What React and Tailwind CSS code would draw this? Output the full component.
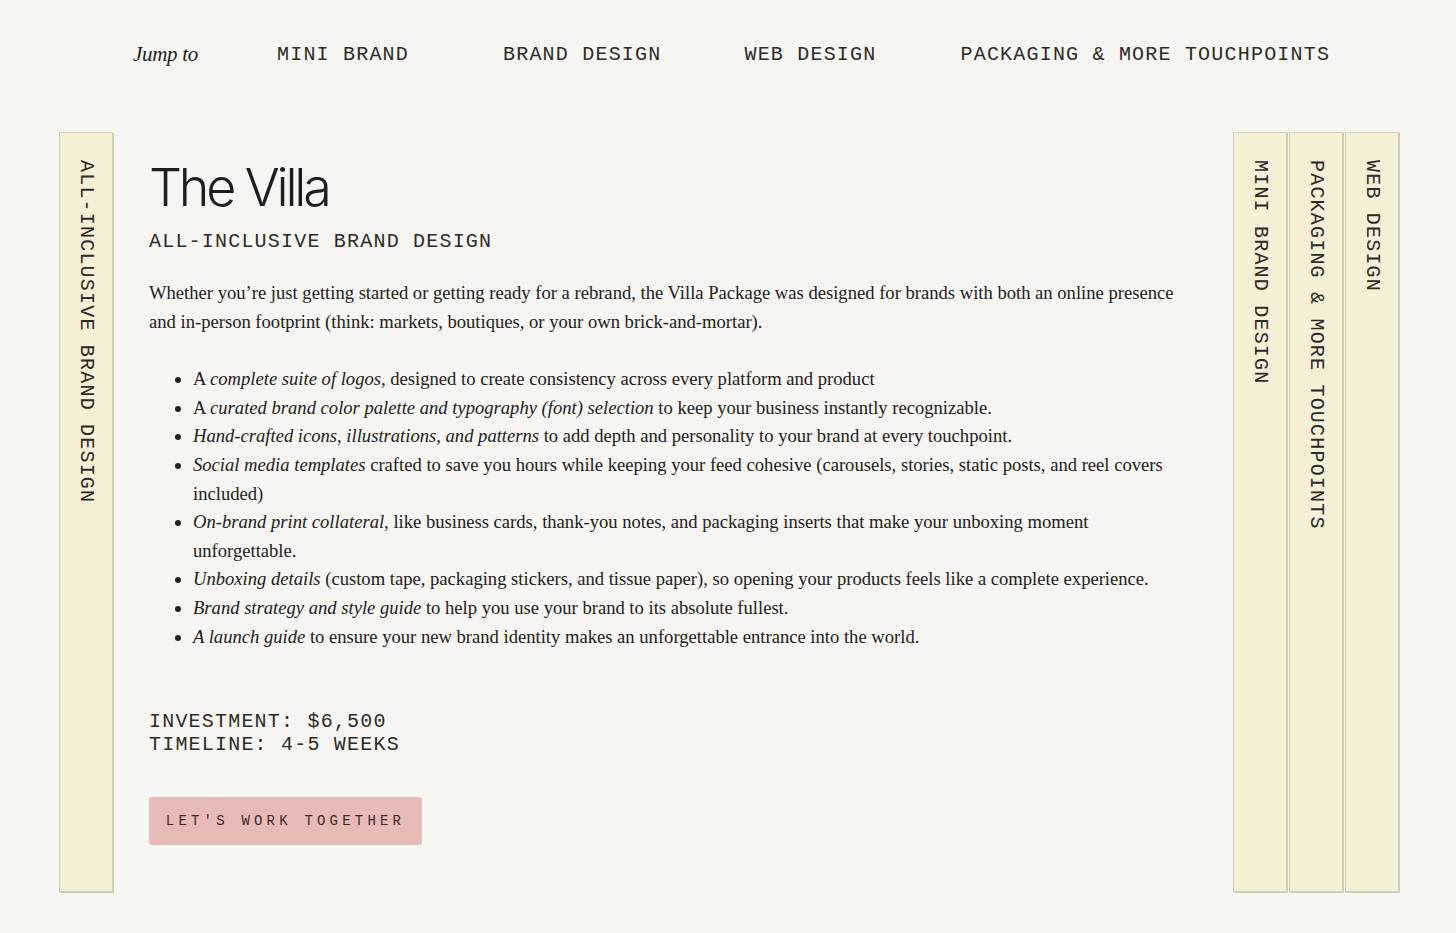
import React from 'react';

const mono = "font-['Courier_New','Nimbus_Mono_PS','FreeMono','Liberation_Mono',monospace]";
const serif = "font-['Liberation_Serif',serif]";

const navItems = [
    { label: 'MINI BRAND', className: 'ml-[79px]' },
    { label: 'BRAND DESIGN', className: 'ml-[94px]' },
    { label: 'WEB DESIGN', className: 'ml-[83px]' },
    { label: 'PACKAGING & MORE TOUCHPOINTS', className: 'ml-[84px]' },
];

const bullets = [
    [<>A <em>complete suite of logos</em>, designed to create consistency across every platform and product</>],
    [<>A <em>curated brand color palette and typography (font) selection</em> to keep your business instantly recognizable.</>],
    [<><em>Hand-crafted icons, illustrations, and patterns</em> to add depth and personality to your brand at every touchpoint.</>],
    [<><em>Social media templates</em> crafted to save you hours while keeping your feed cohesive (carousels, stories, static posts, and reel covers included)</>],
    [<><em>On-brand print collateral</em>, like business cards, thank-you notes, and packaging inserts that make your unboxing moment unforgettable.</>],
    [<><em>Unboxing details</em> (custom tape, packaging stickers, and tissue paper), so opening your products feels like a complete experience.</>],
    [<><em>Brand strategy and style guide</em> to help you use your brand to its absolute fullest.</>],
    [<><em>A launch guide</em> to ensure your new brand identity makes an unforgettable entrance into the world.</>],
];

function Tab({ label }) {
    return (
        <div className="w-[54px] h-[760px] bg-[#f5efd5] border border-[#d5cfb6] shadow-[1px_1px_0_#cfc9b2] pt-[27px] flex justify-center">
            <span className={`${mono} [writing-mode:vertical-rl] text-[20px] leading-none tracking-[1.2px] text-[#2d2b27] whitespace-nowrap`}>
                {label}
            </span>
        </div>
    );
}

export default function App() {
    return (
        <div className="min-h-[933px] bg-[#f6f5f1] text-[#222120]">
            {/* Nav */}
            <div className="flex items-center pt-[41px] pl-[133px] h-[94px] pb-[26px]">
                <span className={`${serif} italic text-[21px] leading-none tracking-[-0.3px]`}>Jump to</span>
                {navItems.map((item) => (
                    <span
                        key={item.label}
                        className={`${mono} ${item.className} text-[20px] leading-none tracking-[1.2px] whitespace-nowrap text-[#2d2b27]`}
                    >
                        {item.label}
                    </span>
                ))}
            </div>

            <div className="flex pt-[38px] pl-[59px] pr-[57px]">
                <Tab label="ALL-INCLUSIVE BRAND DESIGN" />

                {/* Main content */}
                <div className="flex-1 pl-[36px] pr-[40px] pt-[30px]">
                    <h1 className="font-['Inter',sans-serif] font-light text-[52px] leading-none tracking-[-3.2px] text-[#1f1e1c]">
                        The Villa
                    </h1>
                    <div className={`${mono} mt-[18px] text-[20px] leading-none tracking-[1.2px] text-[#2d2b27]`}>
                        ALL-INCLUSIVE BRAND DESIGN
                    </div>

                    <p className={`${serif} mt-[27px] text-[18.6px] leading-[28.6px] max-w-[1035px]`}>
                        Whether you’re just getting started or getting ready for a rebrand, the Villa Package was designed for brands with both an online presence and in-person footprint (think: markets, boutiques, or your own brick-and-mortar).
                    </p>

                    <ul className={`${serif} mt-[29px] text-[18.6px] leading-[28.6px] list-disc pl-[44px] max-w-[1035px]`}>
                        {bullets.map((b, i) => (
                            <li key={i}>{b}</li>
                        ))}
                    </ul>

                    <div className={`${mono} mt-[59px] text-[20px] leading-[23px] tracking-[1.2px] text-[#2d2b27]`}>
                        <div>INVESTMENT: $6,500</div>
                        <div>TIMELINE: 4-5 WEEKS</div>
                    </div>

                    <button className={`${mono} mt-[41px] w-[273px] h-[48px] bg-[#e8bab5] rounded-[3px] text-[14px] tracking-[4.2px] text-[#3a2a28]`}>
                        LET'S WORK TOGETHER
                    </button>
                </div>

                {/* Right tabs */}
                <div className="flex gap-[2px]">
                    <Tab label="MINI BRAND DESIGN" />
                    <Tab label="PACKAGING & MORE TOUCHPOINTS" />
                    <Tab label="WEB DESIGN" />
                </div>
            </div>
        </div>
    );
}
